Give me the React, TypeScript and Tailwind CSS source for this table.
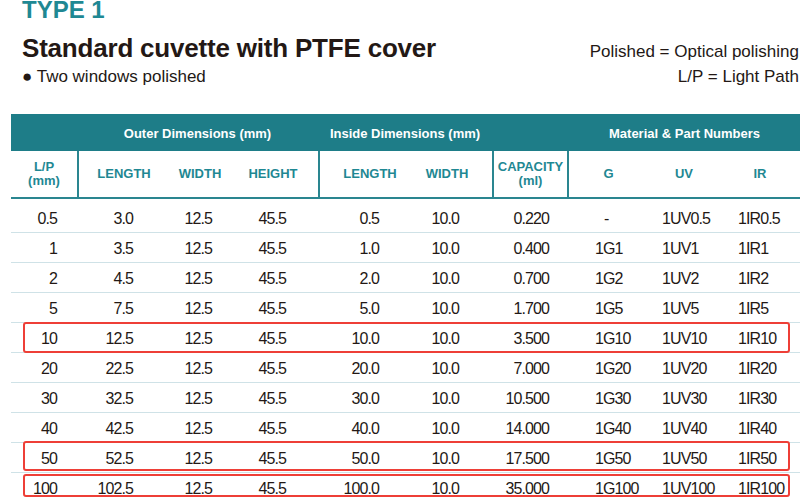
const cols = "grid grid-cols-[66px_86px_74px_81px_102px_72px_77px_79px_72px_80px]";

type Row = {
  lp: string;
  oLen: string;
  oWid: string;
  oHgt: string;
  iLen: string;
  iWid: string;
  cap: string;
  g: string;
  uv: string;
  ir: string;
  box?: string;
};

const rows: Row[] = [
  { lp: "0.5", oLen: "3.0", oWid: "12.5", oHgt: "45.5", iLen: "0.5", iWid: "10.0", cap: "0.220", g: "-", uv: "1UV0.5", ir: "1IR0.5" },
  { lp: "1", oLen: "3.5", oWid: "12.5", oHgt: "45.5", iLen: "1.0", iWid: "10.0", cap: "0.400", g: "1G1", uv: "1UV1", ir: "1IR1" },
  { lp: "2", oLen: "4.5", oWid: "12.5", oHgt: "45.5", iLen: "2.0", iWid: "10.0", cap: "0.700", g: "1G2", uv: "1UV2", ir: "1IR2" },
  { lp: "5", oLen: "7.5", oWid: "12.5", oHgt: "45.5", iLen: "5.0", iWid: "10.0", cap: "1.700", g: "1G5", uv: "1UV5", ir: "1IR5" },
  { lp: "10", oLen: "12.5", oWid: "12.5", oHgt: "45.5", iLen: "10.0", iWid: "10.0", cap: "3.500", g: "1G10", uv: "1UV10", ir: "1IR10", box: "-top-px -bottom-px" },
  { lp: "20", oLen: "22.5", oWid: "12.5", oHgt: "45.5", iLen: "20.0", iWid: "10.0", cap: "7.000", g: "1G20", uv: "1UV20", ir: "1IR20" },
  { lp: "30", oLen: "32.5", oWid: "12.5", oHgt: "45.5", iLen: "30.0", iWid: "10.0", cap: "10.500", g: "1G30", uv: "1UV30", ir: "1IR30" },
  { lp: "40", oLen: "42.5", oWid: "12.5", oHgt: "45.5", iLen: "40.0", iWid: "10.0", cap: "14.000", g: "1G40", uv: "1UV40", ir: "1IR40" },
  { lp: "50", oLen: "52.5", oWid: "12.5", oHgt: "45.5", iLen: "50.0", iWid: "10.0", cap: "17.500", g: "1G50", uv: "1UV50", ir: "1IR50", box: "-top-[2px] bottom-px" },
  { lp: "100", oLen: "102.5", oWid: "12.5", oHgt: "45.5", iLen: "100.0", iWid: "10.0", cap: "35.000", g: "1G100", uv: "1UV100", ir: "1IR100", box: "top-px bottom-[5px]" },
];

function SubHead({ children, className = "" }: { children: React.ReactNode; className?: string }) {
  return (
    <div className={`flex items-center justify-center text-center text-[13px] font-bold leading-[14px] text-[#1f8893] ${className}`}>
      {children}
    </div>
  );
}

export default function App() {
  return (
    <div className="h-[500px] w-[800px] overflow-hidden bg-white font-['Liberation_Sans',Arial,sans-serif] text-[#231815]">
      {/* heading */}
      <div className="pl-[22px] pr-px">
        <div className="-mt-[2px] text-[24px] font-bold leading-[24px] text-[#1f8893]">TYPE 1</div>
        <div className="mt-[11px] flex items-baseline justify-between">
          <h1 className="text-[26px] font-bold leading-[30px] tracking-[-0.2px]">Standard cuvette with PTFE cover</h1>
          <span className="text-[17px] leading-[20px]">Polished = Optical polishing</span>
        </div>
        <div className="mt-[4px] flex items-baseline justify-between text-[17px] leading-[20px]">
          <span>● Two windows polished</span>
          <span>L/P = Light Path</span>
        </div>
      </div>

      {/* table */}
      <div className="ml-[11px] mt-[27px]">
        <div className={`${cols} h-[37px] bg-[#1e7d88] pt-[2px] text-[13px] font-bold text-white`}>
          <div />
          <div className="col-span-3 flex items-center justify-center">Outer Dimensions (mm)</div>
          <div className="col-span-2 flex items-center justify-center">Inside Dimensions (mm)</div>
          <div />
          <div className="col-span-3 flex items-center justify-center">Material &amp; Part Numbers</div>
        </div>

        <div className={`${cols} h-[48px] border-b-2 border-[#2a8690]`}>
          <SubHead>
            L/P
            <br />
            (mm)
          </SubHead>
          <SubHead className="border-l-2 border-[#2a8690] pl-[6px]">LENGTH</SubHead>
          <SubHead>WIDTH</SubHead>
          <SubHead className="pr-[9px]">HEIGHT</SubHead>
          <SubHead className="border-l-2 border-[#2a8690]">LENGTH</SubHead>
          <SubHead className="pr-[18px]">WIDTH</SubHead>
          <SubHead className="border-x-2 border-[#2a8690]">
            CAPACITY
            <br />
            (ml)
          </SubHead>
          <SubHead>G</SubHead>
          <SubHead>UV</SubHead>
          <SubHead>IR</SubHead>
        </div>

        {rows.map((r, i) => (
          <div
            key={r.lp}
            className={`${cols} relative items-center border-b border-[#cfe2e7] text-[16px] tracking-[-0.9px] ${
              i === 0 ? "h-[34px] pt-[6px]" : "h-[30px] pt-[2px]"
            }`}
          >
            <div className="pr-[20px] text-right">{r.lp}</div>
            <div className="pr-[30px] text-right">{r.oLen}</div>
            <div className="pr-[25px] text-right">{r.oWid}</div>
            <div className="pr-[32px] text-right">{r.oHgt}</div>
            <div className="pr-[41px] text-right">{r.iLen}</div>
            <div className="pr-[33px] text-right">{r.iWid}</div>
            <div className="pr-[20px] text-right">{r.cap}</div>
            <div className={r.g === "-" ? "pl-[35px]" : "pl-[26px]"}>{r.g}</div>
            <div className="pl-[14px]">{r.uv}</div>
            <div className="pl-[18px]">{r.ir}</div>
            {r.box && (
              <div className={`pointer-events-none absolute left-[12px] right-[10px] rounded-[3px] border-[2.5px] border-[#ee3f37] ${r.box}`} />
            )}
          </div>
        ))}
      </div>
    </div>
  );
}
